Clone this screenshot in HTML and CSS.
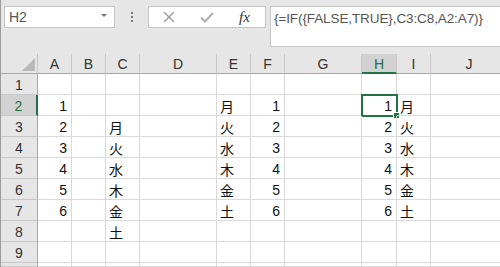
FILE: index.html
```html
<!DOCTYPE html>
<html>
<head>
    <meta name="viewport" content="width=device-width, initial-scale=1.0">
    <link rel="stylesheet" href="styles.css">
</head>
<body>
    <div class="window">
        <!-- Formula bar -->
        <div class="formula-bar">
            <div class="name-box">
                <span>H2</span>
                <svg class="drop" width="8" height="5" viewBox="0 0 8 5"><path d="M1 1h6L4 4z" fill="#777"/></svg>
            </div>
            <div class="grip"><i></i><i></i><i></i></div>
            <div class="fx-box">
                <svg class="btn-icon" width="14" height="14" viewBox="0 0 14 14"><path d="M2 2L12 12M12 2L2 12" stroke="#9a9a9a" stroke-width="1.4" fill="none"/></svg>
                <svg class="btn-icon" width="16" height="14" viewBox="0 0 16 14"><path d="M2 7.5L6 11.5L14 3" stroke="#b0b0b0" stroke-width="2" fill="none"/></svg>
                <span class="fx">fx</span>
            </div>
            <div class="formula">{=IF({FALSE,TRUE},C3:C8,A2:A7)}</div>
        </div>

        <!-- Sheet grid -->
        <div class="sheet">
            <div class="corner"><span class="tri"></span></div>
            <div class="col-head">A</div>
            <div class="col-head">B</div>
            <div class="col-head">C</div>
            <div class="col-head">D</div>
            <div class="col-head">E</div>
            <div class="col-head">F</div>
            <div class="col-head">G</div>
            <div class="col-head sel">H</div>
            <div class="col-head">I</div>
            <div class="col-head">J</div>

            <div class="row-head">1</div>
            <div class="cell"></div><div class="cell"></div><div class="cell"></div><div class="cell"></div><div class="cell"></div>
            <div class="cell"></div><div class="cell"></div><div class="cell"></div><div class="cell"></div><div class="cell"></div>

            <div class="row-head sel">2</div>
            <div class="cell num">1</div><div class="cell"></div><div class="cell"></div><div class="cell"></div><div class="cell jp">月</div>
            <div class="cell num">1</div><div class="cell"></div><div class="cell num active">1<span class="handle"></span></div><div class="cell jp">月</div><div class="cell"></div>

            <div class="row-head">3</div>
            <div class="cell num">2</div><div class="cell"></div><div class="cell jp">月</div><div class="cell"></div><div class="cell jp">火</div>
            <div class="cell num">2</div><div class="cell"></div><div class="cell num">2</div><div class="cell jp">火</div><div class="cell"></div>

            <div class="row-head">4</div>
            <div class="cell num">3</div><div class="cell"></div><div class="cell jp">火</div><div class="cell"></div><div class="cell jp">水</div>
            <div class="cell num">3</div><div class="cell"></div><div class="cell num">3</div><div class="cell jp">水</div><div class="cell"></div>

            <div class="row-head">5</div>
            <div class="cell num">4</div><div class="cell"></div><div class="cell jp">水</div><div class="cell"></div><div class="cell jp">木</div>
            <div class="cell num">4</div><div class="cell"></div><div class="cell num">4</div><div class="cell jp">木</div><div class="cell"></div>

            <div class="row-head">6</div>
            <div class="cell num">5</div><div class="cell"></div><div class="cell jp">木</div><div class="cell"></div><div class="cell jp">金</div>
            <div class="cell num">5</div><div class="cell"></div><div class="cell num">5</div><div class="cell jp">金</div><div class="cell"></div>

            <div class="row-head">7</div>
            <div class="cell num">6</div><div class="cell"></div><div class="cell jp">金</div><div class="cell"></div><div class="cell jp">土</div>
            <div class="cell num">6</div><div class="cell"></div><div class="cell num">6</div><div class="cell jp">土</div><div class="cell"></div>

            <div class="row-head">8</div>
            <div class="cell"></div><div class="cell"></div><div class="cell jp">土</div><div class="cell"></div><div class="cell"></div>
            <div class="cell"></div><div class="cell"></div><div class="cell"></div><div class="cell"></div><div class="cell"></div>

            <div class="row-head">9</div>
            <div class="cell"></div><div class="cell"></div><div class="cell"></div><div class="cell"></div><div class="cell"></div>
            <div class="cell"></div><div class="cell"></div><div class="cell"></div><div class="cell"></div><div class="cell"></div>

            <!-- row 10, only its top edge shows -->
            <div class="row-head"></div>
            <div class="cell"></div><div class="cell"></div><div class="cell"></div><div class="cell"></div><div class="cell"></div>
            <div class="cell"></div><div class="cell"></div><div class="cell"></div><div class="cell"></div><div class="cell"></div>
        </div>
    </div>
</body>
</html>
```

FILE: styles.css
```css
/* Page */
body {
    margin: 0;
    width: 500px;
    height: 267px;
    overflow: hidden;
    background: #e6e6e6;
    font-family: "Liberation Sans", Arial, "Noto Sans CJK JP", sans-serif;
}

.window {
    border-left: 1px solid #9c9c9c;
    height: 267px;
    box-sizing: border-box;
    overflow: hidden;
}

/* Formula bar */
.formula-bar {
    display: flex;
    align-items: flex-start;
    padding: 6px 0 0 3px;
    height: 54px;
    box-sizing: border-box;
}

.name-box {
    width: 111px;
    height: 22px;
    box-sizing: border-box;
    background: white;
    border: 1px solid #c6c6c6;
    display: flex;
    align-items: center;
    justify-content: space-between;
    padding: 0 6px 0 4px;
    font-size: 14px;
    color: #555;
}

.name-box .drop {
    margin-top: -4px;
}

.grip {
    width: 33px;
    height: 22px;
    display: flex;
    flex-direction: column;
    align-items: center;
    justify-content: center;
    gap: 2px;
}

.grip i {
    width: 2px;
    height: 2px;
    background: #7a7a7a;
}

.fx-box {
    width: 118px;
    height: 22px;
    box-sizing: border-box;
    background: white;
    border: 1px solid #c6c6c6;
    display: flex;
    align-items: center;
    padding-left: 13px;
}

.btn-icon {
    margin-right: 23px;
}

.fx-box .btn-icon + .btn-icon {
    margin-right: 24px;
}

.fx {
    font-family: "Liberation Serif", serif;
    font-style: italic;
    font-size: 15px;
    color: #333;
}

.formula {
    margin-left: 4px;
    flex: 1;
    height: 41px;
    box-sizing: border-box;
    background: white;
    border: 1px solid #c6c6c6;
    border-right: none;
    padding: 4px 0 0 3px;
    font-size: 13.5px;
    letter-spacing: -0.1px;
    color: #555;
    white-space: nowrap;
}

/* Sheet grid */
.sheet {
    display: grid;
    grid-template-columns: 37px 34px 34px 34px 77px 34px 34px 77px 35px 34px 77px;
    grid-template-rows: 20px repeat(9, 21px) 4px;
    background: white;
}

.corner {
    background: #e6e6e6;
    border-right: 1px solid #c4c4c4;
    border-bottom: 1px solid #a8a8a8;
    position: relative;
}

.tri {
    position: absolute;
    right: 2px;
    bottom: 2px;
    width: 0;
    height: 0;
    border-left: 13px solid transparent;
    border-bottom: 13px solid #b8b8b8;
}

.col-head {
    background: #e6e6e6;
    border-right: 1px solid #c8c8c8;
    border-bottom: 1px solid #a8a8a8;
    text-align: center;
    font-size: 14px;
    line-height: 20px;
    color: #333;
}

.col-head.sel {
    background: #d2d2d2;
    color: #217346;
    border-bottom: 2px solid #217346;
}

.row-head {
    background: #e6e6e6;
    border-right: 1px solid #a8a8a8;
    border-bottom: 1px solid #c8c8c8;
    text-align: center;
    font-size: 14px;
    line-height: 22px;
    color: #333;
}

.row-head.sel {
    background: #d2d2d2;
    color: #217346;
    border-right: 2px solid #217346;
}

.cell {
    border-right: 1px solid #dadada;
    border-bottom: 1px solid #dadada;
    font-size: 14px;
    line-height: 21px;
    color: #111;
    padding: 1px 3px 0;
    position: relative;
}

.num {
    text-align: right;
    padding-right: 4px;
}

.jp {
    font-family: "Noto Sans CJK JP", sans-serif;
    font-size: 14px;
    line-height: 20px;
}

/* Active cell */
.active {
    outline: 2px solid #217346;
    outline-offset: -1px;
}

.handle {
    position: absolute;
    right: -4px;
    bottom: -4px;
    width: 5px;
    height: 5px;
    background: #217346;
    border: 1px solid white;
}
```
